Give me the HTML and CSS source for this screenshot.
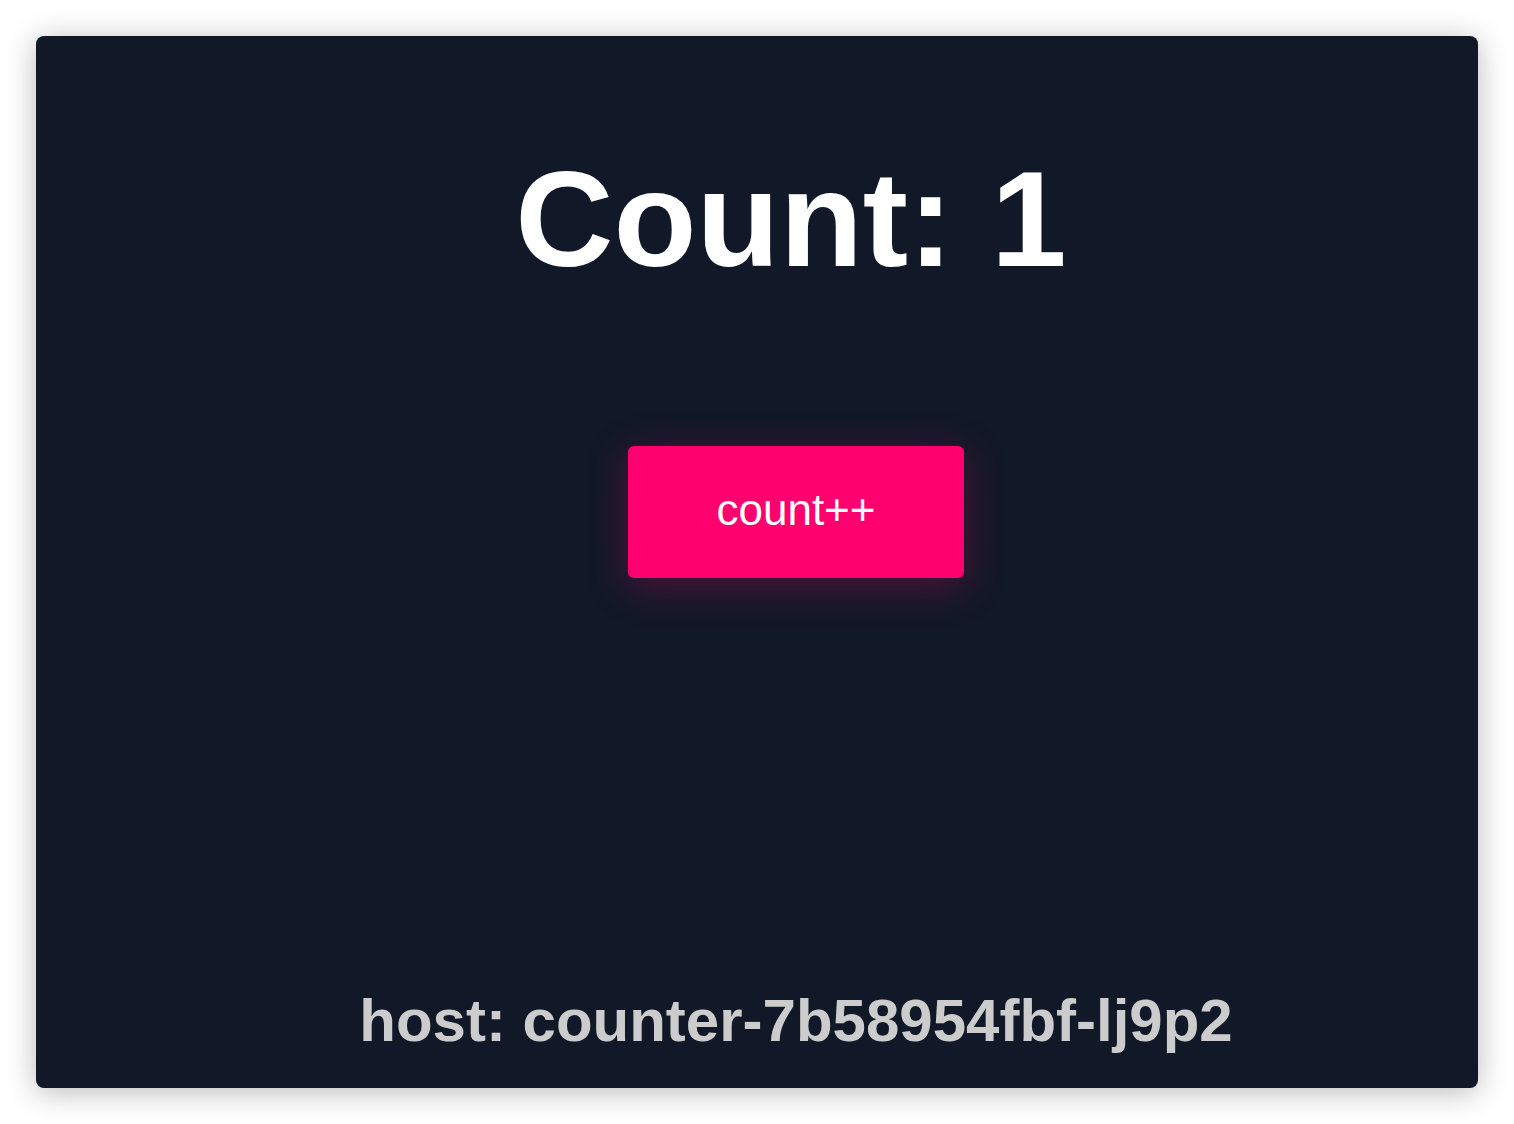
FILE: index.html
```html
<!DOCTYPE html>
<html lang="en">
<head>
<meta charset="utf-8">
<title>Counter</title>
<link rel="stylesheet" href="styles.css">
</head>
<body>
<main class="card">
  <h1 class="count">Count: 1</h1>
  <button class="btn" type="button">count++</button>
  <p class="host">host: counter-7b58954fbf-lj9p2</p>
</main>
</body>
</html>
```
FILE: styles.css
```css
html, body {
  margin: 0;
  padding: 0;
  background: #ffffff;
}
body {
  padding: 36px;
  height: 1124px;
  box-sizing: border-box;
  font-family: "Liberation Sans", Arial, Helvetica, sans-serif;
}
.card {
  box-sizing: border-box;
  height: 1052px;
  background: #111827;
  border-radius: 8px;
  box-shadow: 0 4px 30px rgba(0, 0, 0, 0.28);
  display: flex;
  flex-direction: column;
  align-items: center;
  padding: 115px 0 37px 78px;
}
.count {
  margin: 0 0 0 -10px;
  font-size: 136px;
  line-height: 1;
  font-weight: 700;
  color: #ffffff;
}
.btn {
  margin-top: 159px;
  width: 336px;
  height: 132px;
  border: 0;
  border-radius: 6px;
  background: #ff006e;
  color: #ffffff;
  font-family: "Liberation Sans", Arial, Helvetica, sans-serif;
  font-size: 44px;
  padding: 0 0 4px;
  box-shadow: 0 8px 40px rgba(255, 0, 112, 0.28);
  cursor: pointer;
}
.host {
  margin: auto 0 0;
  font-size: 60px;
  line-height: 1;
  font-weight: 700;
  color: #cccccc;
}
```
